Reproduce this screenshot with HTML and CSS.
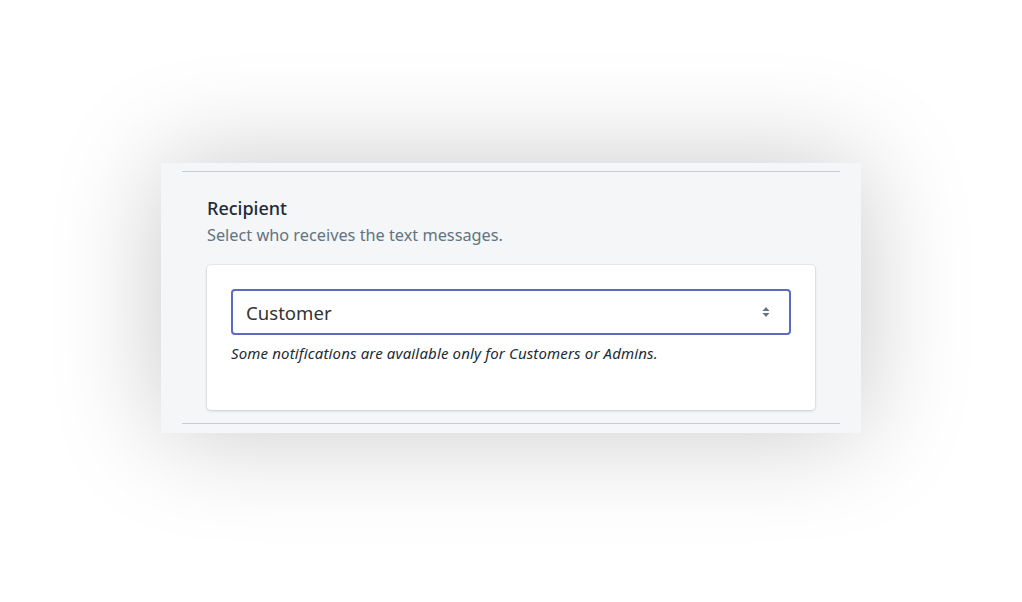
FILE: index.html
```html
<!DOCTYPE html>
<html lang="en">
<head>
    <meta charset="UTF-8">
    <title>Recipient</title>
    <link rel="stylesheet" href="styles.css">
</head>
<body>
    <div class="stage">
        <div class="panel">
            <div class="section">
                <h2 class="title">Recipient</h2>
                <p class="subtitle">Select who receives the text messages.</p>
                <div class="card">
                    <div class="selectBox">
                        <span class="selectValue">Customer</span>
                        <svg class="arrows" width="10" height="12" viewBox="0 0 10 12">
                            <path d="M5 1 L8.5 5 L1.5 5 Z" fill="#637381"/>
                            <path d="M5 11 L8.5 7 L1.5 7 Z" fill="#637381"/>
                        </svg>
                    </div>
                    <p class="help">Some notifications are available only for Customers or Admins.</p>
                </div>
            </div>
        </div>
    </div>
</body>
</html>
```

FILE: styles.css
```css
*{
    margin:0;
    padding:0;
    box-sizing:border-box;
}

body{
    background:#fff;
    font-family:"Noto Sans","Open Sans","Liberation Sans",sans-serif;
    color:#212b36;
}

.stage{
    width:1022px;
    height:602px;
    padding-top:163px;
    display:flex;
    justify-content:center;
    align-items:flex-start;
}

.panel{
    width:700px;
    background:#f4f6f8;
    padding:8px 21px 9px;
    box-shadow:0 0 110px rgba(0,0,0,.22);
}

.section{
    border-top:1px solid #c4cdd5;
    border-bottom:1px solid #c4cdd5;
    padding:24px 25px 13px;
}

.title{
    font-size:18px;
    font-weight:500;
    line-height:24px;
    color:#212b36;
}

.subtitle{
    margin-top:3px;
    font-size:16.3px;
    line-height:24px;
    color:#637381;
    margin-bottom:18px;
}

.card{
    background:#fff;
    border-radius:4px;
    box-shadow:0 0 0 1px rgba(63,63,68,.06),0 1px 3px rgba(63,63,68,.18);
    padding:24px 24px 47px;
}

.selectBox{
    height:46px;
    border:2px solid #5c6ac4;
    border-radius:4px;
    display:flex;
    align-items:center;
    justify-content:space-between;
    padding:0 18px 0 13px;
}

.selectValue{
    font-size:18.6px;
    color:#333;
}

.help{
    margin-top:8px;
    font-size:15px;
    letter-spacing:0.15px;
    font-style:italic;
    line-height:20px;
    color:#212b36;
}
```
